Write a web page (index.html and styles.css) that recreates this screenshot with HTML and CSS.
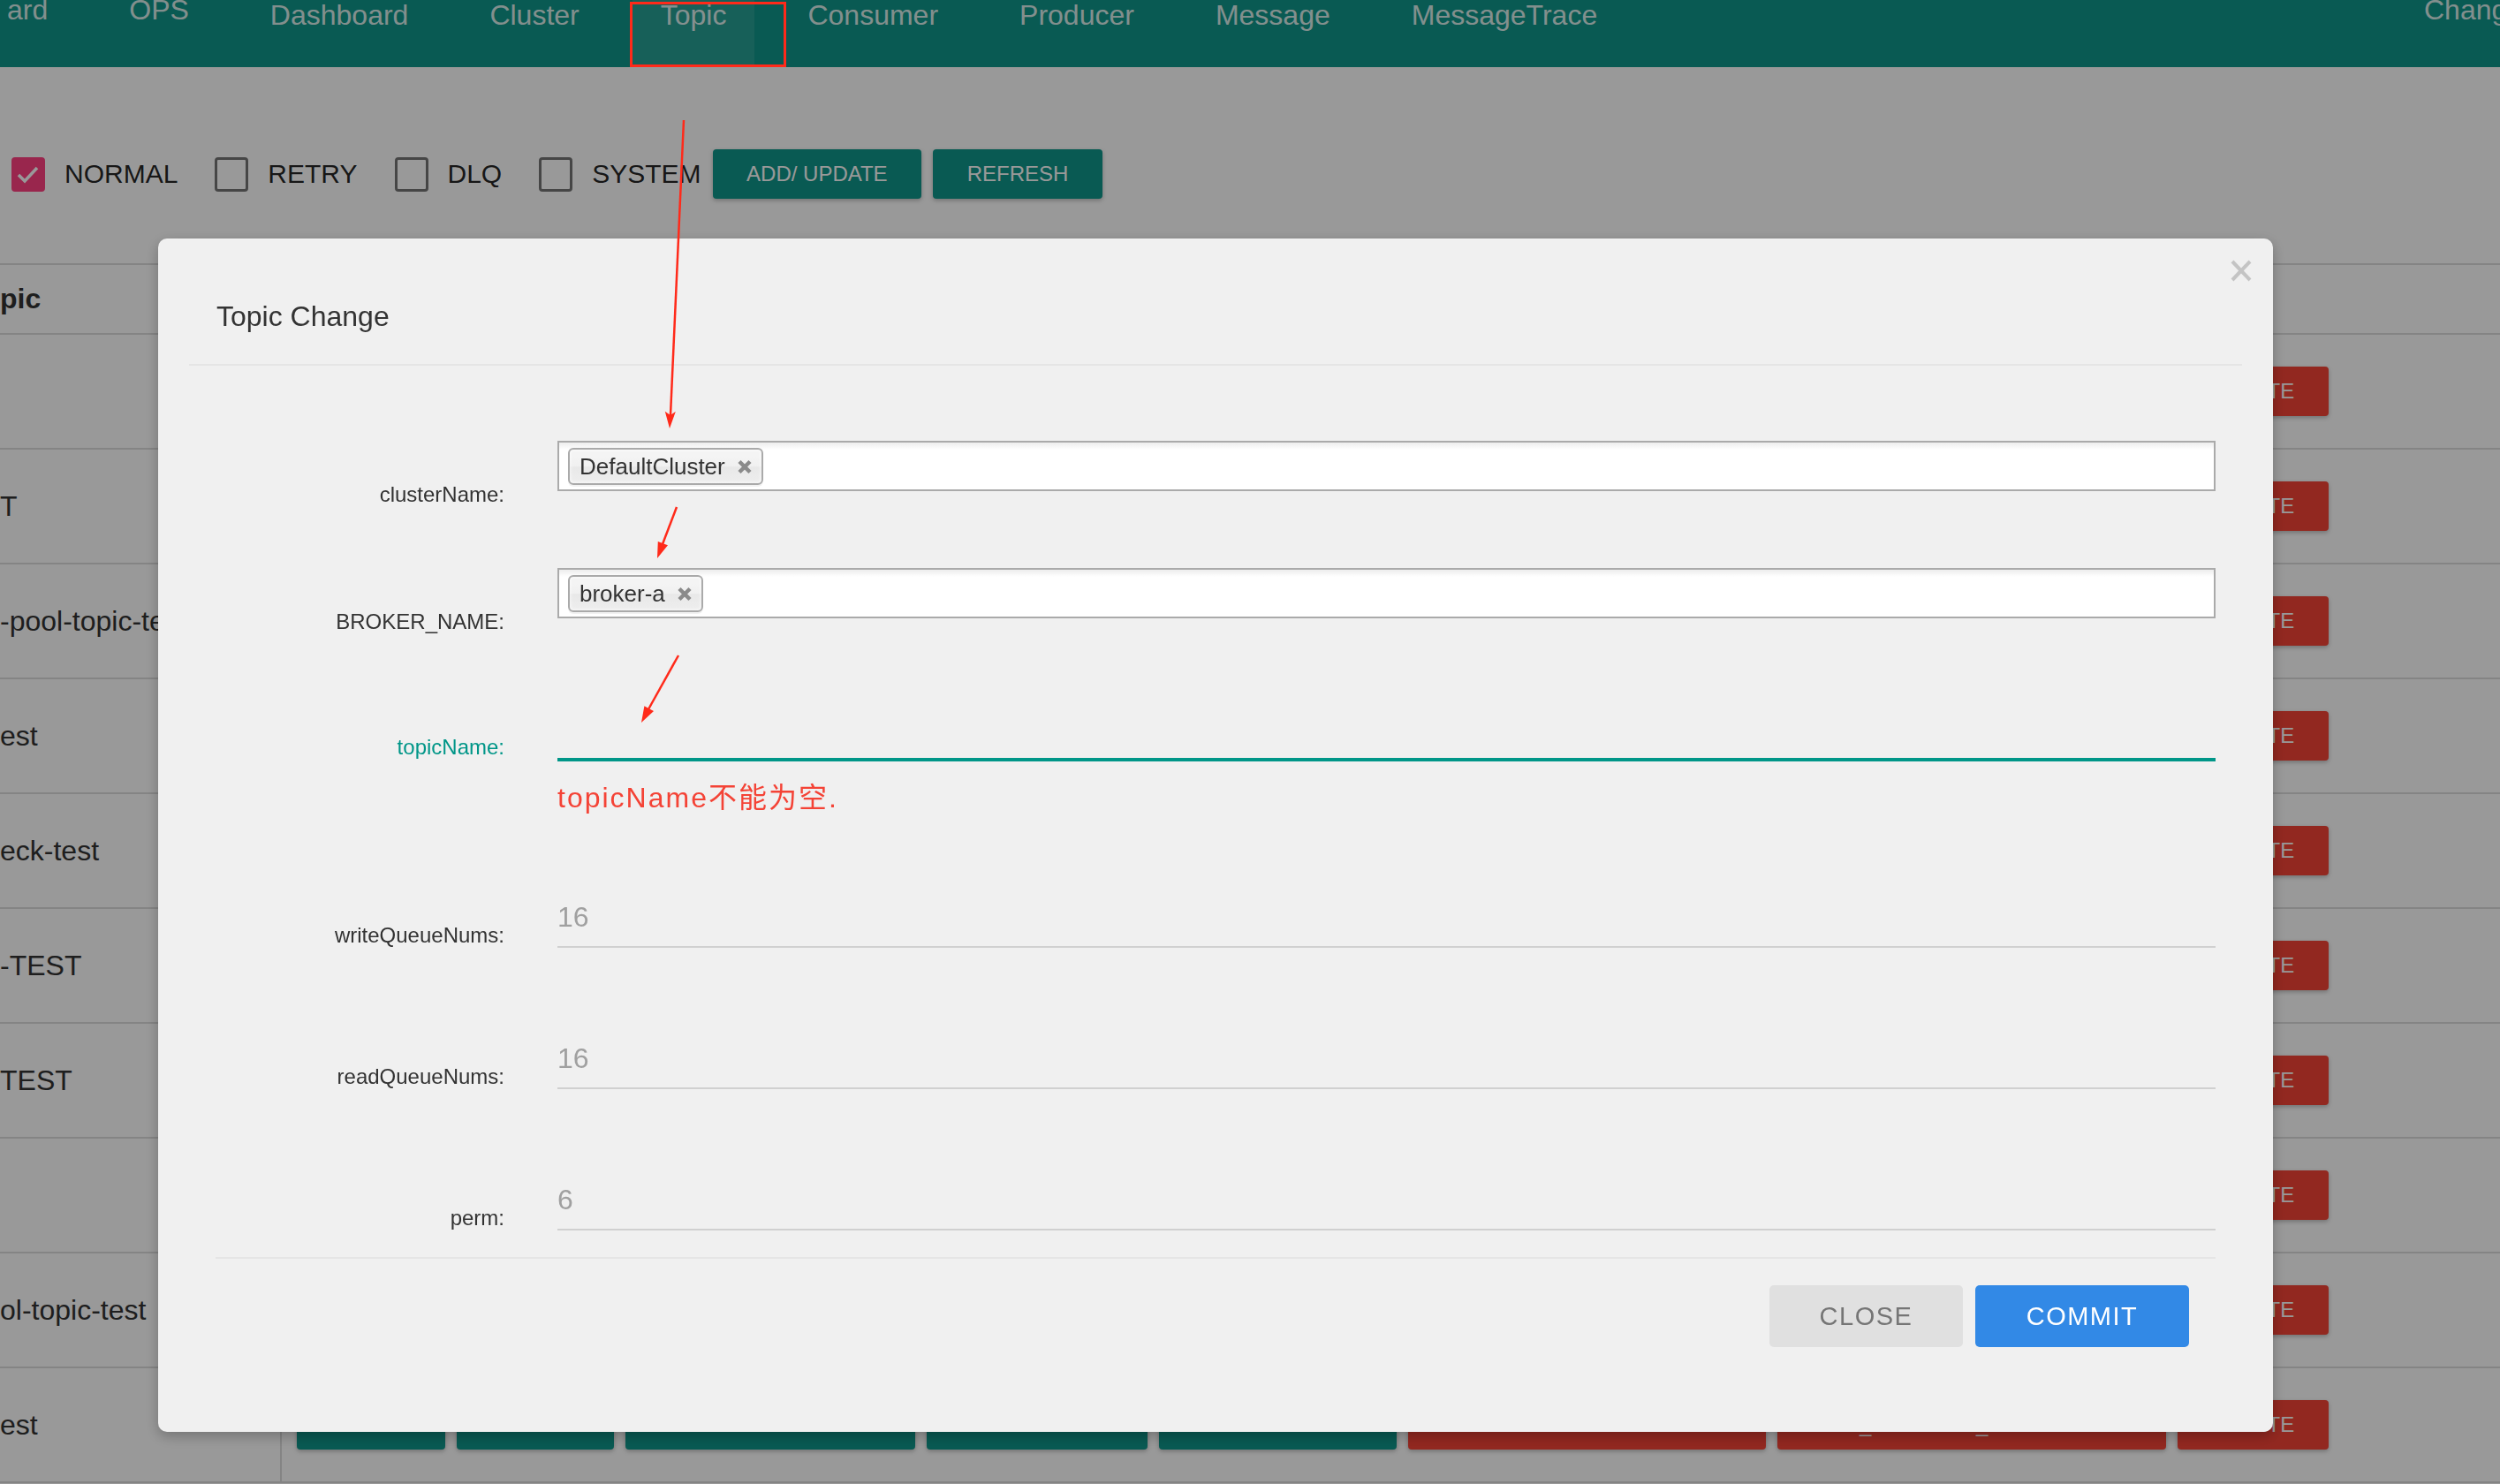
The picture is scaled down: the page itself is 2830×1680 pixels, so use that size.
FILE: index.html
```html
<!DOCTYPE html>
<html lang="en">
<head>
<meta charset="utf-8">
<title>Topic</title>
<link rel="stylesheet" href="styles.css">
</head>
<body>
<header class="nav">
  <a class="nav-item first up">ard</a>
  <a class="nav-item up">OPS</a>
  <a class="nav-item">Dashboard</a>
  <a class="nav-item">Cluster</a>
  <a class="nav-item active">Topic</a>
  <a class="nav-item">Consumer</a>
  <a class="nav-item">Producer</a>
  <a class="nav-item">Message</a>
  <a class="nav-item">MessageTrace</a>
  <div class="nav-right">Change Language</div>
</header>

<main class="page">
  <div class="toolbar">
    <label class="cb checked"><span class="box"><svg width="32" height="33" viewBox="0 0 32 33"><polyline points="5,17 12,24 26,9" fill="none" stroke="#fff" stroke-width="3.5"/></svg></span>NORMAL</label>
    <label class="cb"><span class="box"></span>RETRY</label>
    <label class="cb"><span class="box"></span>DLQ</label>
    <label class="cb last"><span class="box"></span>SYSTEM</label>
    <button class="btn">ADD/ UPDATE</button>
    <button class="btn">REFRESH</button>
  </div>

  <div class="table">
    <div class="thead"><div class="c-name">pic</div><div class="c-ops">Operation</div></div>
    <div class="trow"><div class="c-name"></div><div class="c-ops"><button class="obtn">STATUS</button><button class="obtn">ROUTER</button><button class="obtn">CONSUMER MANAGE</button><button class="obtn">TOPIC CONFIG</button><button class="obtn">SEND MESSAGE</button><button class="obtn red">RESET CONSUMER OFFSET</button><button class="obtn red">SKIP_MESSAGE_ACCUMULATE</button><button class="obtn red">DELETE</button></div></div>
    <div class="trow"><div class="c-name">T</div><div class="c-ops"><button class="obtn">STATUS</button><button class="obtn">ROUTER</button><button class="obtn">CONSUMER MANAGE</button><button class="obtn">TOPIC CONFIG</button><button class="obtn">SEND MESSAGE</button><button class="obtn red">RESET CONSUMER OFFSET</button><button class="obtn red">SKIP_MESSAGE_ACCUMULATE</button><button class="obtn red">DELETE</button></div></div>
    <div class="trow"><div class="c-name">-pool-topic-test</div><div class="c-ops"><button class="obtn">STATUS</button><button class="obtn">ROUTER</button><button class="obtn">CONSUMER MANAGE</button><button class="obtn">TOPIC CONFIG</button><button class="obtn">SEND MESSAGE</button><button class="obtn red">RESET CONSUMER OFFSET</button><button class="obtn red">SKIP_MESSAGE_ACCUMULATE</button><button class="obtn red">DELETE</button></div></div>
    <div class="trow"><div class="c-name">est</div><div class="c-ops"><button class="obtn">STATUS</button><button class="obtn">ROUTER</button><button class="obtn">CONSUMER MANAGE</button><button class="obtn">TOPIC CONFIG</button><button class="obtn">SEND MESSAGE</button><button class="obtn red">RESET CONSUMER OFFSET</button><button class="obtn red">SKIP_MESSAGE_ACCUMULATE</button><button class="obtn red">DELETE</button></div></div>
    <div class="trow"><div class="c-name">eck-test</div><div class="c-ops"><button class="obtn">STATUS</button><button class="obtn">ROUTER</button><button class="obtn">CONSUMER MANAGE</button><button class="obtn">TOPIC CONFIG</button><button class="obtn">SEND MESSAGE</button><button class="obtn red">RESET CONSUMER OFFSET</button><button class="obtn red">SKIP_MESSAGE_ACCUMULATE</button><button class="obtn red">DELETE</button></div></div>
    <div class="trow"><div class="c-name">-TEST</div><div class="c-ops"><button class="obtn">STATUS</button><button class="obtn">ROUTER</button><button class="obtn">CONSUMER MANAGE</button><button class="obtn">TOPIC CONFIG</button><button class="obtn">SEND MESSAGE</button><button class="obtn red">RESET CONSUMER OFFSET</button><button class="obtn red">SKIP_MESSAGE_ACCUMULATE</button><button class="obtn red">DELETE</button></div></div>
    <div class="trow"><div class="c-name">TEST</div><div class="c-ops"><button class="obtn">STATUS</button><button class="obtn">ROUTER</button><button class="obtn">CONSUMER MANAGE</button><button class="obtn">TOPIC CONFIG</button><button class="obtn">SEND MESSAGE</button><button class="obtn red">RESET CONSUMER OFFSET</button><button class="obtn red">SKIP_MESSAGE_ACCUMULATE</button><button class="obtn red">DELETE</button></div></div>
    <div class="trow"><div class="c-name"></div><div class="c-ops"><button class="obtn">STATUS</button><button class="obtn">ROUTER</button><button class="obtn">CONSUMER MANAGE</button><button class="obtn">TOPIC CONFIG</button><button class="obtn">SEND MESSAGE</button><button class="obtn red">RESET CONSUMER OFFSET</button><button class="obtn red">SKIP_MESSAGE_ACCUMULATE</button><button class="obtn red">DELETE</button></div></div>
    <div class="trow"><div class="c-name">ol-topic-test</div><div class="c-ops"><button class="obtn">STATUS</button><button class="obtn">ROUTER</button><button class="obtn">CONSUMER MANAGE</button><button class="obtn">TOPIC CONFIG</button><button class="obtn">SEND MESSAGE</button><button class="obtn red">RESET CONSUMER OFFSET</button><button class="obtn red">SKIP_MESSAGE_ACCUMULATE</button><button class="obtn red">DELETE</button></div></div>
    <div class="trow"><div class="c-name">est</div><div class="c-ops"><button class="obtn">STATUS</button><button class="obtn">ROUTER</button><button class="obtn">CONSUMER MANAGE</button><button class="obtn">TOPIC CONFIG</button><button class="obtn">SEND MESSAGE</button><button class="obtn red">RESET CONSUMER OFFSET</button><button class="obtn red">SKIP_MESSAGE_ACCUMULATE</button><button class="obtn red">DELETE</button></div></div>
  </div>
</main>

<div class="overlay"></div>

<div class="modal">
  <div class="modal-head">
    <h4 class="modal-title">Topic Change</h4>
  </div>
  <svg class="close-x" width="24" height="25" viewBox="0 0 24 25"><line x1="2" y1="2" x2="22" y2="23" stroke="#c4c4c4" stroke-width="4"/><line x1="22" y1="2" x2="2" y2="23" stroke="#c4c4c4" stroke-width="4"/></svg>
  <div class="modal-body">
    <div class="frow r1">
      <div class="flabel">clusterName:</div>
      <div class="select-wrap"><div class="chosen"><span class="tag">DefaultCluster<svg width="18" height="17" viewBox="0 0 18 17"><line x1="3" y1="2.5" x2="15" y2="14.5" stroke="#8a8a8a" stroke-width="4.5"/><line x1="15" y1="2.5" x2="3" y2="14.5" stroke="#8a8a8a" stroke-width="4.5"/></svg></span></div></div>
    </div>
    <div class="frow r2">
      <div class="flabel">BROKER_NAME:</div>
      <div class="select-wrap"><div class="chosen"><span class="tag">broker-a<svg width="18" height="17" viewBox="0 0 18 17"><line x1="3" y1="2.5" x2="15" y2="14.5" stroke="#8a8a8a" stroke-width="4.5"/><line x1="15" y1="2.5" x2="3" y2="14.5" stroke="#8a8a8a" stroke-width="4.5"/></svg></span></div></div>
    </div>
    <div class="frow r3">
      <div class="flabel focus">topicName:</div>
      <div class="md-input focus"></div>
    </div>
    <div class="frow msg">
      <div></div>
      <div class="err">topicName不能为空.</div>
    </div>
    <div class="frow r4">
      <div class="flabel">writeQueueNums:</div>
      <div class="md-input">16</div>
    </div>
    <div class="frow r5">
      <div class="flabel">readQueueNums:</div>
      <div class="md-input">16</div>
    </div>
    <div class="frow r6">
      <div class="flabel">perm:</div>
      <div class="md-input">6</div>
    </div>
  </div>
  <div class="modal-foot">
    <button class="mbtn close">CLOSE</button>
    <button class="mbtn commit">COMMIT</button>
  </div>
</div>

<svg class="annot" width="2830" height="1680" viewBox="0 0 2830 1680">
  <rect x="714.5" y="3.5" width="174" height="71" fill="none" stroke="#ff2a1a" stroke-width="3"/>
  <line x1="774" y1="136" x2="759" y2="470" stroke="#ff2a1a" stroke-width="2.5"/>
  <polygon points="758,485 764.8,466 758.8,470 752.8,465.7" fill="#ff2a1a"/>
  <line x1="766" y1="574" x2="750" y2="616" stroke="#ff2a1a" stroke-width="2.5"/>
  <polygon points="744,632 756,617.3 750.4,615.2 744.8,613.1" fill="#ff2a1a"/>
  <line x1="768" y1="742" x2="734" y2="803" stroke="#ff2a1a" stroke-width="2.5"/>
  <polygon points="726,818 740,805.1 734.7,802.2 729.4,799.3" fill="#ff2a1a"/>
</svg>
</body>
</html>
```

FILE: styles.css
```css
* { box-sizing: border-box; margin: 0; padding: 0; }

html, body { width: 2830px; height: 1680px; overflow: hidden; }

body {
  font-family: "Liberation Sans", Arial, Helvetica, "Noto Sans CJK SC", sans-serif;
  background: #fff;
  color: #333;
}

/* ---------- top navigation ---------- */
.nav {
  display: flex;
  height: 76px;
  background: #0f968a;
  padding-left: 8px;
  gap: 28px;
  overflow: hidden;
}
.nav-item {
  font-size: 32px;
  line-height: 32px;
  padding: 1px 32px 0;
  height: 76px;
  color: rgba(255, 255, 255, .87);
  white-space: nowrap;
  flex-shrink: 0;
}
.nav-item.first { padding-left: 0; }
.nav-item.up { padding-top: 0; margin-top: -5px; height: 81px; }
.nav-item.active { background: rgba(255, 255, 255, .1); }
.nav-right {
  margin-left: auto;
  width: 86px;
  flex-shrink: 0;
  overflow: hidden;
  white-space: nowrap;
  font-size: 32px;
  line-height: 32px;
  margin-top: -5px;
  color: rgba(255, 255, 255, .87);
}

/* ---------- toolbar ---------- */
.toolbar {
  display: flex;
  align-items: center;
  height: 56px;
  margin-top: 93px;
  padding-left: 13px;
}
.cb {
  display: flex;
  align-items: center;
  gap: 22px;
  margin-right: 42px;
  font-size: 30px;
  color: rgba(0, 0, 0, .87);
}
.cb.last { margin-right: 13px; }
.box {
  width: 38px;
  height: 39px;
  border: 3px solid rgba(0, 0, 0, .54);
  border-radius: 4px;
  display: flex;
  align-items: center;
  justify-content: center;
}
.cb.checked .box { background: #ff4081; border-color: #ff4081; }

.btn, .obtn {
  height: 56px;
  padding: 0 38.5px;
  border: none;
  border-radius: 4px;
  background: #0f968a;
  color: #fff;
  font: 24px "Liberation Sans", Arial, sans-serif;
  box-shadow: 0 2px 5px rgba(0, 0, 0, .26);
  white-space: nowrap;
  flex-shrink: 0;
}
.btn { margin-right: 13px; }
.obtn.red { background: #f44336; }

/* ---------- table ---------- */
.table { margin-top: 73px; }
.thead, .trow {
  display: flex;
  align-items: center;
  border-bottom: 2px solid #ddd;
}
.thead {
  height: 81px;
  border-top: 2px solid #ddd;
  font-weight: bold;
  font-size: 32px;
  color: #333;
}
.trow { height: 130px; }
.c-name {
  width: 317px;
  flex-shrink: 0;
  font-size: 32px;
  color: #333;
  white-space: nowrap;
  overflow: hidden;
}
.c-ops {
  flex: 1;
  align-self: stretch;
  display: flex;
  align-items: center;
  gap: 13px;
  padding-left: 17px;
  border-left: 2px solid #ddd;
}

/* ---------- modal ---------- */
.overlay {
  position: fixed;
  inset: 0;
  background: rgba(0, 0, 0, .4);
  z-index: 10;
}
.modal {
  position: fixed;
  left: 179px;
  top: 270px;
  width: 2394px;
  height: 1351px;
  background: #f0f0f0;
  border-radius: 10px;
  z-index: 20;
  box-shadow: 0 5px 15px rgba(0, 0, 0, .25);
}
.modal-head {
  margin: 0 35px;
  padding: 68px 0 34px 31px;
  border-bottom: 2px solid #e5e5e5;
}
.modal-title {
  font-size: 32px;
  line-height: 40px;
  font-weight: normal;
  color: #333;
}
.close-x {
  position: absolute;
  top: 24px;
  right: 24px;
}
.modal-body { padding: 0 65px 0 35px; }

.frow {
  display: grid;
  grid-template-columns: 357px 1877px;
  column-gap: 60px;
  align-items: end;
}
.r1 { margin-top: 85px; }
.r2 { margin-top: 69px; }
.r3 { margin-top: 87px; }
.msg { margin-top: 23px; }
.r4 { margin-top: 95px; }
.r5, .r6 { margin-top: 105px; }

.flabel {
  font-size: 24px;
  line-height: 28px;
  text-align: right;
  color: #333;
}
.flabel.focus { color: #009688; }

.select-wrap { padding-bottom: 18px; }
.chosen {
  height: 57px;
  border: 2px solid #aaa;
  background: linear-gradient(#eee 1%, #fff 15%);
  padding: 6px 10px;
  display: flex;
  align-items: flex-start;
}
.tag {
  display: inline-flex;
  align-items: center;
  height: 42px;
  border: 2px solid #aaa;
  border-radius: 6px;
  padding: 0 10px 0 11px;
  background: linear-gradient(#f4f4f4 20%, #f0f0f0 50%, #e8e8e8 52%, #eee);
  box-shadow: inset 0 0 4px #fff, 0 2px 0 rgba(0, 0, 0, .05);
  font-size: 26px;
  color: #333;
}
.tag svg { margin-left: 13px; }

.md-input {
  height: 55px;
  font-size: 32px;
  line-height: 40px;
  padding-bottom: 13px;
  border-bottom: 2px solid #d0d0d0;
  color: #a0a0a0;
}
.md-input.focus {
  border-bottom-color: #009688;
  box-shadow: 0 2px 0 #009688;
}
.err {
  font-family: "Liberation Sans", Arial, "Noto Sans CJK SC", sans-serif;
  font-size: 32px;
  line-height: 40px;
  letter-spacing: 2px;
  color: #f44336;
}

.modal-foot {
  margin: 30px 65px 0;
  border-top: 2px solid #e5e5e5;
  padding: 30px 30px 0 0;
  display: flex;
  justify-content: flex-end;
  gap: 14px;
}
.mbtn {
  height: 70px;
  border: none;
  border-radius: 5px;
  font: 29px "Liberation Sans", Arial, sans-serif;
  letter-spacing: 1.5px;
}
.mbtn.close { width: 219px; background: #e0e0e0; color: #757575; }
.mbtn.commit { width: 242px; background: #3289e6; color: #fff; }

/* ---------- annotations drawn on the screenshot ---------- */
.annot {
  position: fixed;
  left: 0;
  top: 0;
  z-index: 30;
  pointer-events: none;
}
```
